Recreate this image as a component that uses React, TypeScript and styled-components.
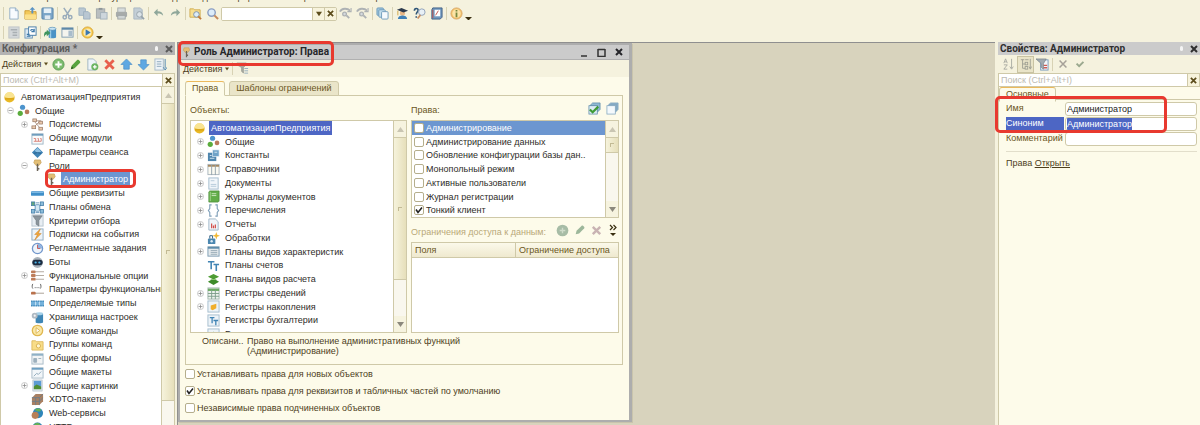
import React, { useEffect, useRef } from 'react';
import styled, { createGlobalStyle, css } from 'styled-components';

const FONT = '"Liberation Sans", Arial, sans-serif';
const TITLE_FONT = 'Roboto, "Liberation Sans", sans-serif';
const c = {
  cream: '#f5f2de',
  paper: '#fdfbea',
  desk: '#d8d3bd',
  line: '#cfc9a8',
  brown: '#4d3e1c',
  soft: '#7a6a44',
  blue: '#6c96d0',
  navy: '#4d66c4',
  red: '#e8392f',
};

const GlobalStyle = createGlobalStyle`
  * { box-sizing: border-box; }
  body { margin: 0; background: ${c.cream}; overflow: hidden; }
  button, input { font: inherit; color: inherit; }
  ::selection { background: ${c.navy}; color: #ffffff; }
`;

/* ---------- icons, all on a 14 x 14 grid ---------- */

const blueS = { fill: 'none', stroke: '#3c78a8', strokeWidth: 1.2 };

const art: Record<string, React.ReactNode> = {
  newDoc: <><path d="M3 1h6l3 3v9H3z" fill="#f8fbfe" stroke="#93aec6" /><path d="M9 1v3h3" fill="none" stroke="#93aec6" /></>,
  open: <><path d="M1 4h5l1 1h6v8H1z" fill="#f3c95c" stroke="#cf9d32" /><path d="M1 8h12v5H1z" fill="#fbe08c" /><path d="M8 7V3H6l3-3 3 3h-2v4z" fill="#5a93c4" /></>,
  save: <><rect x="1" y="1" width="12" height="12" rx="1" fill="#7ba5c8" stroke="#5884aa" /><rect x="3" y="1.500" width="8" height="5" fill="#e6f0f7" /><rect x="4" y="9" width="6" height="4" fill="#dfe9f0" /></>,
  cut: <g fill="none" stroke="#9aacbb" strokeWidth="1.600"><path d="M3 1l6 9M11 1L5 10" /><circle cx="4" cy="11" r="1.800" /><circle cx="10" cy="11" r="1.800" /></g>,
  copy: <g fill="#b9c7d2" stroke="#9fb1bf"><path d="M1 1h6l1 1v7H1z" /><path d="M6 5h5l2 2v6H6z" /></g>,
  paste: <><rect x="1.500" y="2" width="9" height="10" fill="#b9bec0" stroke="#a3a9ab" /><rect x="4" y="1" width="4" height="2" fill="#8f9699" /><rect x="6" y="6" width="7" height="7" fill="#cdd6dc" stroke="#a4b1ba" /></>,
  print: <><rect x="3" y="1" width="8" height="5" fill="#d7dcdd" stroke="#a8adad" /><rect x="1" y="5" width="12" height="6" rx="1.500" fill="#a7abaa" /><rect x="3" y="9" width="8" height="4" fill="#ced3d3" stroke="#a0a5a5" /></>,
  preview: <><path d="M2 1h7l2 2v10H2z" fill="#c3ced6" stroke="#a9b7c1" /><circle cx="8" cy="8" r="3" fill="#dbe3e8" stroke="#97a3ab" /><path d="M10 10l3 3" stroke="#97a3ab" strokeWidth="1.800" /></>,
  undo: <path d="M2 6l4-4v2.500c4 0 6 2 6 5-1.500-2-3-2.500-6-2.500V10z" fill="#8fa79a" />,
  redo: <path d="M12 6L8 2v2.500c-4 0-6 2-6 5 1.500-2 3-2.500 6-2.500V10z" fill="#8fa79a" />,
  folderFind: <><path d="M1 2h4l1 1h6v8H1z" fill="#f8df90" stroke="#d1ad53" /><circle cx="8" cy="8" r="3" fill="#dcecf8" stroke="#7b8fa6" /><path d="M10 10l3 3" stroke="#c07a3c" strokeWidth="2" /></>,
  find: <><circle cx="6" cy="6" r="4" fill="#dcecfa" stroke="#8a9dc1" strokeWidth="1.500" /><path d="M9 9l4 4" stroke="#c58a5c" strokeWidth="2.200" /></>,
  findNext: <g fill="none" stroke="#aeb2b4" strokeWidth="2"><path d="M1 5c2-4 8-4 11-1" /><path d="M13 1v4H9" strokeWidth="1.200" /><circle cx="6" cy="7.500" r="2" fill="#d5dade" strokeWidth="1.400" /><path d="M8 9l3 3" /></g>,
  windows: <g stroke="#6f9cbb"><rect x="1" y="1" width="7" height="8" rx="1" fill="#9cc4dc" /><rect x="3" y="3" width="7" height="8" rx="1" fill="#c3deec" /><rect x="6" y="5" width="7" height="8" rx="1" fill="#f5fafd" /></g>,
  graduate: <><circle cx="7" cy="6.500" r="2.800" fill="#e7b686" /><path d="M2 13c0-5 10-5 10 0z" fill="#3f80b8" /><path d="M1 3l5-2 7 3-5 2z" fill="#2c3a4d" /><path d="M2 4v5" stroke="#d3a544" /></>,
  helpFind: <><path d="M1.500 4c0-3 4-3 4-.5C5.500 5.500 3.500 5.500 3.500 8M3.500 10v1.500" fill="none" stroke="#2f5577" strokeWidth="1.700" /><circle cx="9.500" cy="5.500" r="3.500" fill="#e8f0f6" stroke="#8fa0b5" /><path d="M8 8.500l-3 4" stroke="#c78c60" strokeWidth="1.800" /></>,
  book: <><path d="M3 1h10v10l-2 2H2V3z" fill="#6f97be" stroke="#415f85" /><rect x="5" y="3" width="6" height="7" fill="#fff" /><path d="M6 9l3-5M3 3v9" stroke="#c0504a" /></>,
  info: <><circle cx="7" cy="7" r="6" fill="#f3c06a" stroke="#d8a767" /><circle cx="7" cy="7" r="4.500" fill="#fbe4a6" /><path d="M7 6v5M7 3.200v1.600" stroke="#75863e" strokeWidth="1.900" /></>,
  grayForm: <><rect x="2" y="1" width="11" height="12" fill="#d3d7d9" stroke="#c0c5c8" /><path d="M4 4h7M6 7h5M6 10h5" stroke="#a9afb3" strokeWidth="1.500" /></>,
  refreshForm: <><rect x="1" y="3" width="8" height="10" fill="#dbe8f2" stroke="#6e96b8" /><rect x="5" y="1" width="8" height="9" fill="#fff" stroke="#4379a5" /><path d="M7 5c1-2 4-1 4 1M11 3v3H8M3 9h3M3 11h4" {...blueS} /></>,
  dbUpdate: <><path d="M5 3v9c0 1.500 8 1.500 8 0V3z" fill="#4b93c6" /><path d="M7 4v9" stroke="#9bcbe8" strokeWidth="1.500" /><ellipse cx="9" cy="3" rx="4" ry="1.600" fill="#c9e4f3" stroke="#3f7eaa" strokeWidth=".6" /><path d="M0 12c0-5 1-6 3-6V4l4 3.500L3 11V9c-1 0-2 1-3 3z" fill="#3f9460" /></>,
  formCfg: <><rect x="1" y="2" width="12" height="10" fill="#f4f4ee" stroke="#7f9cb2" /><path d="M1 3h12" stroke="#5d88a8" strokeWidth="2" /><rect x="8" y="5" width="4" height="6" fill="#a8bccb" /></>,
  run: <><circle cx="7" cy="7" r="6" fill="#f7c744" stroke="#d7a53a" /><circle cx="7" cy="7" r="4.300" fill="#fbe9ae" /><path d="M5 3.500l5.500 3.500L5 10.500z" fill="#3b78b2" /></>,
  plus: <><circle cx="7" cy="7" r="6" fill="#7dbd6f" stroke="#5a9a54" /><path d="M7 3.500v7M3.500 7h7" stroke="#fff" strokeWidth="2" /></>,
  plusOff: <><circle cx="7" cy="7" r="6.300" fill="#a7bca6" /><path d="M7 4v6M4 7h6" stroke="#cfdccb" strokeWidth="1.500" /></>,
  pencil: <><path d="M2 12l1-4 6-6c1-1 4 2 3 3l-6 6z" fill="#58a33f" /><path d="M2 12l1-3 2 2z" fill="#2e5b22" /></>,
  pencilOff: <path d="M2 12l1-4 6-6c1-1 4 2 3 3l-6 6z" fill="#9db79b" />,
  addCopy: <><path d="M2 1h6l3 3v9H2z" fill="#eef4f8" stroke="#9fb4c4" /><circle cx="9.500" cy="9.500" r="3.800" fill="#6cb562" /><path d="M9.500 7.500v4M7.500 9.500h4" stroke="#fff" strokeWidth="1.300" /></>,
  del: <path d="M2.500 2.500l9 9M11.500 2.500l-9 9" stroke="#e8604d" strokeWidth="3" />,
  delOff: <path d="M3 3l8 8M11 3l-8 8" stroke="#c9b3b3" strokeWidth="2.600" />,
  up: <path d="M7 1l6 6h-3v5H4V7H1z" fill="#5fa8e2" stroke="#4a8cc6" strokeWidth=".7" />,
  down: <path d="M7 13l6-6h-3V2H4v5H1z" fill="#5fa8e2" stroke="#4a8cc6" strokeWidth=".7" />,
  sortList: <><rect x="1" y="1" width="9" height="12" fill="#eef3f7" stroke="#a6b9c8" /><path d="M3 4h5M3 6.500h5M3 9h5" stroke="#8ba6bb" /><path d="M12 1v10M10 10l2 3 2-3" fill="none" stroke="#4b84b2" /></>,
  ball: <><circle cx="7" cy="7" r="5.500" fill="#e9b824" /><path d="M1.500 6.500a5.500 5.500 0 0111 0c-3 1.500-8 1.500-11 0z" fill="#f9e492" /><path d="M2 8.500h10" stroke="#d39b12" /></>,
  common: <><circle cx="6" cy="3.500" r="2.800" fill="#4d94cd" /><circle cx="3.500" cy="10" r="2.800" fill="#5aac3d" /><circle cx="10.800" cy="8.500" r="2.500" fill="#b97a5c" /></>,
  subsystems: <g fill="#e9c9ae" stroke="#9b7b66" strokeWidth=".8"><path d="M4 4l5 6M9 4L3 10M5 3h6" fill="none" /><rect x="2" y="1" width="4" height="3" /><rect x="8.500" y="3.500" width="4" height="3" /><rect x="1" y="8.500" width="4" height="3" /><rect x="8.500" y="10" width="4" height="3" /></g>,
  modules: <><rect x="1" y="2" width="12" height="11" fill="#fafafa" stroke="#9db5c6" /><path d="M1 3h12" stroke="#6f9dbd" strokeWidth="2" /><path d="M3 7h2v3M7 7h1v3M10 7h1v3M3 10h8" fill="none" stroke="#d98278" /></>,
  session: <><path d="M7 1l6 6-6 6-6-6z" fill="#3f83b5" /><path d="M7 2l4 4-4 1.500L4 5z" fill="#8fc1e2" /><path d="M3 8l4-1 4 1" fill="none" stroke="#28618f" /></>,
  role: <><path d="M4 1h6l1 3-2.500 3h-3L3 4z" fill="#e3bf75" stroke="#c39c58" strokeWidth=".7" /><path d="M7 5v8M7 10.500h2" stroke="#6c6458" strokeWidth="1.600" /></>,
  attr: <><rect x="0" y="4.500" width="14" height="5" rx="1" fill="#3f8fc9" /><path d="M.5 5.800h13" stroke="#8cc5ea" /></>,
  exchange: <g stroke="#3f7ba8" strokeWidth=".8"><rect x="4.500" y="4" width="5" height="7" rx="1" fill="#d5e9f4" /><rect x=".5" y="1" width="3.500" height="4" fill="#63a77c" /><rect x="10" y="1" width="3.500" height="4" fill="#8bbcd9" /><rect x=".5" y="9" width="3.500" height="4" fill="#8bbcd9" /><rect x="10" y="9" width="3.500" height="4" fill="#8bbcd9" /><path d="M5 2h4M5 12.500h4" /></g>,
  funnel: <><rect x="1" y="1" width="12" height="12" fill="#e8eef3" stroke="#b5c3cd" /><path d="M2 2h10L8.500 7v6L5.500 11V7z" fill="#8b959c" stroke="#687279" strokeWidth=".6" /></>,
  event: <><rect x="1" y="1" width="12" height="12" fill="#edf3f8" stroke="#8fabc2" /><path d="M10 1L4 7h3l-3 6 7-7H8z" fill="#f3a93b" stroke="#c4781f" strokeWidth=".5" /></>,
  clock: <><circle cx="7" cy="7" r="5.500" fill="#eef4fb" stroke="#7398cc" strokeWidth="1.400" /><path d="M7 7V2a5 5 0 015 5z" fill="#8fb3e0" /><path d="M7 3v4h3" fill="none" stroke="#c65b5b" /></>,
  bot: <><circle cx="7" cy="7" r="5.800" fill="#a9b2ba" /><rect x="1.500" y="4" width="11" height="6" rx="3" fill="#1c2b40" /><circle cx="5" cy="7" r="1.200" fill="#4db5e8" /><circle cx="9" cy="7" r="1.200" fill="#4db5e8" /></>,
  options: <g strokeWidth="1.200" stroke="#b5aca2"><path d="M5 3h9M5 7h9M5 11h9" /><g fill="#bd7c59" stroke="none"><rect x="0" y="1.500" width="5" height="3" rx="1" /><rect x="0" y="5.500" width="5" height="3" rx="1" /><rect x="0" y="9.500" width="5" height="3" rx="1" /></g></g>,
  optParams: <><path d="M2 1C1 2 1 5 2 6M10 1c1 1 1 4 0 5M4 5h1M6 5h1M8 5h1" fill="none" stroke="#5b5b5b" /><path d="M4 11h10" stroke="#a59a8f" /><rect x="0" y="9.500" width="5" height="3" rx="1" fill="#b9714c" /></>,
  types: <><rect x="0" y="4" width="14" height="6" fill="#74b2dc" /><path d="M0 4.500h14M0 9.500h14" stroke="#2f78ab" strokeDasharray="1.500 1" /><path d="M5 5v4M9 5v4" stroke="#d5eaf7" /></>,
  storage: <><path d="M5 3v9c0 1.500 8 1.500 8 0V3z" fill="#3f86b5" /><ellipse cx="9" cy="3" rx="4" ry="1.600" fill="#a7d1e9" /><circle cx="4" cy="5" r="3.200" fill="#aeb9c2" /><circle cx="4" cy="5" r="1.200" fill="#f3f5f6" /></>,
  commands: <><circle cx="7" cy="7" r="5.600" fill="#fae8a8" stroke="#e0b750" strokeWidth="1.400" /><path d="M5.500 4l4 3-4 3z" fill="#fffdf2" stroke="#d6a93c" strokeWidth=".8" /></>,
  cmdGroup: <><path d="M1 3h4l1 1h7v9H1z" fill="#f8dd88" stroke="#deba60" /><circle cx="8" cy="8.500" r="2.300" fill="#fff6d2" stroke="#d8b04d" /></>,
  forms: <><rect x="1" y="2" width="12" height="11" fill="#f2f4f5" stroke="#a7bac7" /><path d="M1 3h12" stroke="#8eb0c6" strokeWidth="2" /><path d="M3 7h3v4H3zM8 7h3" fill="#9db0bd" stroke="#9db0bd" /></>,
  layouts: <><rect x="1" y="2" width="12" height="11" fill="#f2f6f9" stroke="#a7bac7" /><path d="M1 3h12" stroke="#6e9fc2" strokeWidth="2" /><path d="M3 11l3-3 2 1 3-3" fill="none" stroke="#8fa9bb" /></>,
  pictures: <><rect x="2" y="1" width="10" height="12" fill="#dfe7ec" stroke="#a4b3bd" strokeWidth=".6" /><rect x="3" y="2" width="8" height="6" fill="#5c9bd3" /><path d="M3 8l3-2 5 2v3H3z" fill="#4e8d33" /></>,
  xdto: <><path d="M1 5l4-4h8v8l-4 4H1z" fill="#a98062" /><path d="M1 5h8v8M9 5l4-4M1 9h8l4-4M5 5v8" fill="none" stroke="#6f7d88" /></>,
  web: <><circle cx="7.500" cy="6.500" r="5.500" fill="#2f86b9" /><path d="M4 3c2-2 6-2 7 0-1 3-5 2-7 0z" fill="#64b056" /><circle cx="4.500" cy="9" r="3.800" fill="#b78057" /></>,
  http: <><circle cx="7" cy="7" r="5.500" fill="#2f86b9" /><path d="M3 4c2-3 6-3 7 0-1 2-5 2-7 0z" fill="#64b056" /></>,
  constants: <><rect x="1" y="4" width="9" height="9" fill="#4f86ae" /><rect x="6" y="1" width="7" height="7" fill="#6fa3c8" stroke="#e6f0f7" strokeWidth=".7" /><path d="M3 7h2M3 10h5M8 3.500h3" stroke="#d4e6f2" /></>,
  catalogs: <><rect x="1" y="1.500" width="12" height="11" fill="#fbfaf2" stroke="#a9b5bd" /><path d="M1 3h12" stroke="#a5875f" strokeWidth="2" /><path d="M5 2v11M9 2v11" stroke="#93a2ac" /></>,
  docs: <><rect x="2" y="1" width="10" height="12" fill="#f1f6fa" stroke="#a3bbcd" /><path d="M4 8h6M4 10h6M4 4h4" stroke="#b4c9d8" /></>,
  journals: <><path d="M3 1h10v11l-1 1H2V2z" fill="#62ad48" stroke="#4a8c3b" strokeWidth=".8" /><path d="M5 4h5M5 6h5" stroke="#cfe9c3" /><path d="M3.500 2v10" stroke="#a4d48f" /></>,
  enums: <g fill="none" stroke="#7d9eb8" strokeWidth="1.200"><path d="M5 1H3v4L1.500 7 3 9v4h2M9 1h2v4l1.500 2L11 9v4H9" /></g>,
  reports: <><path d="M2 1h7l3 3v9H2z" fill="#f0f5f9" stroke="#9fb6c8" /><path d="M5 11V6M7 11V8M9 11V7" stroke="#d34f4a" strokeWidth="1.300" /></>,
  processing: <><rect x="1" y="7" width="8" height="6" rx="1" fill="#4b87b0" /><path d="M3 7V4h3v3" fill="none" stroke="#2d5c7e" /><circle cx="5" cy="10" r="1.300" fill="#d9e9f3" /><path d="M10 0l1 3 3 1-3 1-1 3-1-3-3-1 3-1z" fill="#f2b935" /></>,
  charPlans: <><rect x="1" y="2" width="12" height="10" fill="#e3e9ec" stroke="#7d9db3" /><path d="M1 3h12" stroke="#5d8cab" strokeWidth="2" /><path d="M4 6h7M4 8h7M4 10h7" stroke="#98abb7" /></>,
  accounts: <g fill="none" stroke="#4084b4" strokeWidth="1.700"><path d="M1 3h7M4.500 3v8" /><path d="M7 6h6M10 6v7" /></g>,
  calcPlans: <><path d="M7 1l6 3-6 3-6-3z" fill="#4e9c34" /><path d="M7 6l6 3.500L7 13 1 9.500z" fill="#3d8b29" /><path d="M4 7h6" stroke="#8ec977" /></>,
  infoReg: <><rect x="1" y="1" width="12" height="12" fill="#eef3ee" stroke="#a2b6ae" /><path d="M1 3h12" stroke="#6bab62" strokeWidth="2.500" /><path d="M1 7h12M1 10h12M5 3v10M9 3v10" stroke="#7d9f8a" /></>,
  accumReg: <><rect x="1" y="1" width="12" height="12" fill="#edf3f8" stroke="#a4bccd" /><path d="M4 6l6-2v5l-4 2-2-1z" fill="#f0af2e" /></>,
  accReg: <><rect x="1" y="1" width="12" height="12" fill="#edf3f8" stroke="#a4bccd" /><path d="M3 4h5M5.500 4v6M7 7h5M9.500 7v5" stroke="#4084b4" strokeWidth="1.400" /></>,
  calcReg: <><rect x="1" y="1" width="12" height="12" fill="#edf3f8" stroke="#a4bccd" /><path d="M7 4l4 2-4 2-4-2z" fill="#4e9c34" /></>,
  checkAll: <g stroke="#5b8aa8" strokeWidth=".8"><path d="M5 1h8v7l-3 3V4H2z" fill="#8fb9d2" /><rect x="1" y="4" width="9" height="9" fill="#dcebf4" /><path d="M2 8l3 3 6-6" fill="none" stroke="#3f9b36" strokeWidth="2.400" /></g>,
  uncheckAll: <g stroke="#7ea3bd" strokeWidth=".8"><path d="M5 1h8v7l-3 3V4H2z" fill="#8fb3cc" /><path d="M3 2.500h8.500V10" fill="none" /><rect x="1" y="4" width="9" height="9" fill="#f4f9fc" /></g>,
  filterOff: <><path d="M1 1h10v2L8 6v6L6 10V6L1 3z" fill="#a8aaa2" stroke="#888b85" strokeWidth=".6" /><path d="M9 7h4M9 9.500h4M9 12h4" stroke="#94aebd" /></>,
  az: <g fill="none" stroke="#a3a59e"><path d="M1 6l2-5 2 5M2 4.500h2M1 8h4l-4 5h4" /><path d="M10 1v11M8 10l2 3 2-3" /></g>,
  category: <g fill="none" stroke="#9a9c90"><path d="M1 2h4M3 2v10h3M3 7h3" /><rect x="6" y="5" width="3" height="3" /><rect x="6" y="10" width="3" height="3" /><path d="M12 1v11M10.500 10l1.500 3 1.500-3M6 2h4" /></g>,
  filterDoc: <><rect x="5" y="2" width="8" height="11" fill="#f2f6fa" stroke="#7a9dbd" /><path d="M8 8h4M8 10.500h4" stroke="#ce5b54" strokeWidth="1.400" /><path d="M0 1h11L8 6v6L5.500 10V6z" fill="#a3abb1" stroke="#727c84" strokeWidth=".7" /></>,
  cancel: <path d="M3 3l8 8M11 3l-8 8" stroke="#a6a199" strokeWidth="1.800" />,
  ok: <path d="M3 6.500l3 3 5-5" fill="none" stroke="#9aa88e" strokeWidth="2.200" />,
};

const Svg = styled.svg<{ $s?: number }>`
  display: block;
  flex: none;
  width: ${p => p.$s ?? 13}px;
  height: ${p => p.$s ?? 13}px;
`;
const Icon = ({ name, size }: { name: string; size?: number }) => (
  <Svg viewBox="0 0 14 14" $s={size} aria-hidden="true">{art[name]}</Svg>
);

/* ---------- shared parts ---------- */

const Shell = styled.div`
  display: flex;
  flex-direction: column;
  height: 100vh;
  overflow: hidden;
  background: ${c.cream};
  color: #2e2c28;
  font: 9px/14px ${FONT};
`;
const MenuStrip = styled.nav`
  display: flex;
  align-items: flex-end;
  gap: 10px;
  height: 2px;
  padding-left: 8px;
  overflow: hidden;
  color: ${c.brown};
  line-height: 10px;
  white-space: nowrap;
`;
const Toolbars = styled.header`
  padding: 2px 2px 0;
`;
const ToolRow = styled.div`
  display: flex;
  align-items: center;
  height: 19px;
`;
const ToolButton = styled.button<{ $on?: boolean; $w?: number }>`
  display: flex;
  flex: none;
  align-items: center;
  justify-content: center;
  width: ${p => p.$w ?? 17}px;
  height: 17px;
  padding: 0;
  border: 0;
  background: none;
  ${p => p.$on && css`
    background: #e9e4c8;
    box-shadow: inset 0 0 0 1px #c9c3a2;
  `}
`;
const Sep = styled.span`
  flex: none;
  width: 1px;
  height: 13px;
  margin: 0 1px;
  background: #d8d2b4;
`;
const More = styled.button`
  align-self: flex-end;
  width: 7px;
  height: 7px;
  padding: 0;
  border: 0;
  background: none;
  &::before {
    content: '';
    display: block;
    border: 3px solid transparent;
    border-top-color: #3a2f10;
  }
`;
const Combo = styled.div`
  display: flex;
  width: 116px;
  height: 14px;
  border: 1px solid ${c.line};
  border-radius: 2px;
  background: #fff;
  overflow: hidden;
`;
const BareInput = styled.input`
  flex: 1;
  min-width: 0;
  padding: 0 2px;
  border: 0;
  outline: 0;
  background: #fff;
  &::placeholder { color: #bcbab2; opacity: 1; }
`;
const FieldButton = styled.button`
  display: flex;
  flex: none;
  align-items: center;
  justify-content: center;
  width: 12px;
  padding: 0;
  border: 0;
  border-left: 1px solid ${c.line};
  background: #f7f3dc;
  color: #5c4c1c;
`;
const Cross = ({ size = 7, width = 2 }: { size?: number; width?: number }) => (
  <svg width={size} height={size} viewBox="0 0 8 8" aria-hidden="true">
    <path d="M1 1l6 6M7 1L1 7" stroke="currentColor" strokeWidth={width} />
  </svg>
);
const Caret = ({ up, color = '#5c4c1c', size = 7 }: { up?: boolean; color?: string; size?: number }) => (
  <svg width={size} height={size} viewBox="0 0 7 7" aria-hidden="true">
    <path d={up ? 'M0 6h7L3.500 1z' : 'M0 1h7L3.500 6z'} fill={color} />
  </svg>
);
const Highlight = styled.span<{ $box: [number, number, number, number] }>`
  position: absolute;
  z-index: 5;
  left: ${p => p.$box[0]}px;
  top: ${p => p.$box[1]}px;
  width: ${p => p.$box[2]}px;
  height: ${p => p.$box[3]}px;
  border: 3px solid ${c.red};
  border-radius: 5px;
  pointer-events: none;
`;
const Work = styled.main`
  display: flex;
  flex: 1;
  min-height: 0;
`;
const PanelTitle = styled.h2<{ $dim?: boolean }>`
  display: flex;
  flex: none;
  align-items: center;
  gap: 6px;
  height: 13px;
  margin: 0;
  padding: 0 2px;
  background: ${p => (p.$dim ? '#b3b3b3' : '#cbcbcb')};
  color: ${p => (p.$dim ? '#5b5b5b' : '#2f2f2f')};
  font: bold 10px/13px ${TITLE_FONT};
  white-space: nowrap;
`;
const Grow = styled.span`
  flex: 1;
`;
const Pin = styled.span`
  width: 3px;
  height: 5px;
  border-radius: 2px;
  background: #f4f4f4;
`;
const CaptionButton = styled.button`
  display: flex;
  align-items: center;
  justify-content: center;
  width: 9px;
  height: 11px;
  padding: 0;
  border: 0;
  background: none;
`;
const PanelTools = styled.div`
  display: flex;
  flex: none;
  align-items: center;
  height: 18px;
  padding-left: 2px;
`;
const MenuButton = styled.button`
  display: flex;
  align-items: center;
  gap: 3px;
  margin-right: 2px;
  padding: 0;
  border: 0;
  background: none;
  color: ${c.brown};
`;
const Search = styled.div`
  display: flex;
  flex: none;
  height: 14px;
  border: 1px solid ${c.line};
  background: #fff;
`;

/* ---------- scroll bar ---------- */

const Bar = styled.div`
  display: flex;
  flex: none;
  flex-direction: column;
  width: 13px;
  border-left: 1px solid ${c.line};
  background: #f9f7ee;
`;
const BarButton = styled.button`
  display: flex;
  flex: none;
  align-items: center;
  justify-content: center;
  height: 16px;
  padding: 0;
  border: 0;
  background: #f6f3df;
`;
const Thumb = styled.div<{ $h: number }>`
  display: flex;
  flex: none;
  align-items: center;
  justify-content: center;
  height: ${p => p.$h}px;
  border: solid ${c.line};
  border-width: 1px 0;
  background: linear-gradient(90deg, #f6f3dc, #e6dfba);
  &::after {
    content: '';
    width: 3px;
    height: 3px;
    border: solid #c2ba94;
    border-width: 1px 0 0 1px;
  }
`;
const ScrollBar = ({ thumb, down = true }: { thumb: number; down?: boolean }) => (
  <Bar>
    <BarButton aria-label="Вверх"><Caret up color="#c9c5b2" /></BarButton>
    <Thumb $h={thumb} />
    <Grow />
    {down && <BarButton aria-label="Вниз"><Caret color="#8b887c" /></BarButton>}
  </Bar>
);

/* ---------- tree ---------- */

type Node = { t: string; i: string; l: number; e?: '+' | '-'; sel?: 'navy' | 'blue' };

const List = styled.ul`
  flex: 1;
  min-width: 0;
  margin: 0;
  padding: 0;
  overflow: hidden;
  background: #fff;
  list-style: none;
`;
const Item = styled.li<{ $pad: number }>`
  display: flex;
  align-items: center;
  height: 14px;
  padding-left: ${p => p.$pad}px;
  white-space: nowrap;
  &:nth-child(4n + 2) { height: 13px; }
`;
const Toggle = styled.button`
  display: flex;
  flex: none;
  align-items: center;
  justify-content: center;
  width: 14px;
  height: 13px;
  padding: 0;
  border: 0;
  background: none;
`;
const Gap = styled.span`
  flex: none;
  width: 14px;
`;
const Name = styled.span<{ $sel?: 'navy' | 'blue' }>`
  margin-left: 3px;
  padding: 0 2px;
  line-height: 14px;
  ${p => p.$sel && css`
    background: ${p.$sel === 'navy' ? c.navy : c.blue};
    color: #fff;
  `}
`;
const Tree = ({ nodes, inset, label }: { nodes: Node[]; inset: number; label: string }) => (
  <List role="tree" aria-label={label}>
    {nodes.map(n => (
      <Item key={n.t} role="treeitem" $pad={inset + Math.max(0, n.l - 1) * 14}>
        {n.e ? (
          <Toggle aria-label={n.e === '+' ? 'Развернуть' : 'Свернуть'}>
            <svg width="7" height="7" viewBox="0 0 7 7" fill="none" stroke="#bdbdbd" strokeWidth=".8">
              <circle cx="3.500" cy="3.500" r="3" />
              <path d={n.e === '+' ? 'M1.500 3.500h4M3.500 1.500v4' : 'M1.500 3.500h4'} stroke="#8c8c8c" />
            </svg>
          </Toggle>
        ) : n.l > 0 && <Gap />}
        <Icon name={n.i} />
        <Name $sel={n.sel}>{n.t}</Name>
      </Item>
    ))}
  </List>
);

const config: Node[] = [
  { t: 'АвтоматизацияПредприятия', i: 'ball', l: 0 },
  { t: 'Общие', i: 'common', l: 1, e: '-' },
  { t: 'Подсистемы', i: 'subsystems', l: 2, e: '+' },
  { t: 'Общие модули', i: 'modules', l: 2 },
  { t: 'Параметры сеанса', i: 'session', l: 2 },
  { t: 'Роли', i: 'role', l: 2, e: '-' },
  { t: 'Администратор', i: 'role', l: 3, sel: 'blue' },
  { t: 'Общие реквизиты', i: 'attr', l: 2 },
  { t: 'Планы обмена', i: 'exchange', l: 2 },
  { t: 'Критерии отбора', i: 'funnel', l: 2 },
  { t: 'Подписки на события', i: 'event', l: 2 },
  { t: 'Регламентные задания', i: 'clock', l: 2 },
  { t: 'Боты', i: 'bot', l: 2 },
  { t: 'Функциональные опции', i: 'options', l: 2, e: '+' },
  { t: 'Параметры функциональных опций', i: 'optParams', l: 2 },
  { t: 'Определяемые типы', i: 'types', l: 2 },
  { t: 'Хранилища настроек', i: 'storage', l: 2 },
  { t: 'Общие команды', i: 'commands', l: 2 },
  { t: 'Группы команд', i: 'cmdGroup', l: 2 },
  { t: 'Общие формы', i: 'forms', l: 2 },
  { t: 'Общие макеты', i: 'layouts', l: 2 },
  { t: 'Общие картинки', i: 'pictures', l: 2, e: '+' },
  { t: 'XDTO-пакеты', i: 'xdto', l: 2 },
  { t: 'Web-сервисы', i: 'web', l: 2 },
  { t: 'HTTP-сервисы', i: 'http', l: 2 },
];
const objects: Node[] = [
  { t: 'АвтоматизацияПредприятия', i: 'ball', l: 0, sel: 'navy' },
  { t: 'Общие', i: 'common', l: 1, e: '+' },
  { t: 'Константы', i: 'constants', l: 1, e: '+' },
  { t: 'Справочники', i: 'catalogs', l: 1, e: '+' },
  { t: 'Документы', i: 'docs', l: 1, e: '+' },
  { t: 'Журналы документов', i: 'journals', l: 1, e: '+' },
  { t: 'Перечисления', i: 'enums', l: 1, e: '+' },
  { t: 'Отчеты', i: 'reports', l: 1, e: '+' },
  { t: 'Обработки', i: 'processing', l: 1 },
  { t: 'Планы видов характеристик', i: 'charPlans', l: 1, e: '+' },
  { t: 'Планы счетов', i: 'accounts', l: 1 },
  { t: 'Планы видов расчета', i: 'calcPlans', l: 1 },
  { t: 'Регистры сведений', i: 'infoReg', l: 1, e: '+' },
  { t: 'Регистры накопления', i: 'accumReg', l: 1, e: '+' },
  { t: 'Регистры бухгалтерии', i: 'accReg', l: 1 },
  { t: 'Регистры расчета', i: 'calcReg', l: 1 },
];
const rights = [
  'Администрирование', 'Администрирование данных', 'Обновление конфигурации базы дан..',
  'Монопольный режим', 'Активные пользователи', 'Журнал регистрации', 'Тонкий клиент',
];

/* ---------- left panel ---------- */

const ConfigPanel = styled.aside`
  position: relative;
  display: flex;
  flex: none;
  flex-direction: column;
  width: 177px;
  padding-right: 2px;
`;
const TreeArea = styled.div`
  display: flex;
  flex: 1;
  min-height: 0;
  border-left: 1px solid ${c.line};
  border-right: 1px solid ${c.line};
  & > ul { padding-top: 3px; }
`;

/* ---------- desktop and window ---------- */

const Desktop = styled.section`
  flex: 1;
  min-width: 0;
  border: solid #8f8f8f;
  border-width: 1px 0 0 1px;
  background: ${c.desk};
`;
const Win = styled.div`
  position: relative;
  width: 454px;
  border: 2px solid #adadad;
  border-right-width: 3px;
  background: ${c.paper};
  box-shadow: 1px 1px 0 #c9c4ac;
`;
const WinTitle = styled.h1`
  display: flex;
  align-items: center;
  gap: 2px;
  height: 15px;
  margin: 0;
  padding: 0 3px 0 1px;
  background: #cbcbcb;
  border-bottom: 1px solid #b0b0b0;
  color: #26262a;
  font: bold 10px/14px ${TITLE_FONT};
`;
const WinButton = styled(CaptionButton)`
  width: 15px;
  height: 13px;
`;
const WinTools = styled(PanelTools)`
  height: 17px;
  padding-left: 3px;
  background: ${c.cream};
`;
const WinBody = styled.div`
  padding: 4px 6px 4px 5px;
  color: ${c.brown};
`;
const Tabs = styled.div`
  display: flex;
  gap: 4px;
`;
const Tab = styled.button<{ $on?: boolean }>`
  z-index: 1;
  height: 15px;
  margin-bottom: -1px;
  padding: 0 6px;
  border: 1px solid ${c.line};
  border-bottom-color: ${p => (p.$on ? c.paper : c.line)};
  border-top-color: ${p => (p.$on ? '#ecb95c' : c.line)};
  border-radius: 3px 3px 0 0;
  background: ${p => (p.$on ? c.paper : '#eae5c9')};
  color: #6a5622;
  line-height: 13px;
`;
const Pane = styled.div`
  padding: 0 3px 8px 4px;
  border: 1px solid ${c.line};
`;
const Columns = styled.div`
  display: grid;
  grid-template-columns: 217px 1fr;
  column-gap: 4px;
`;
const Column = styled.div`
  display: flex;
  flex-direction: column;
`;
const ColumnHead = styled.div<{ $off?: boolean }>`
  display: flex;
  align-items: center;
  gap: 4px;
  height: 24px;
  color: ${p => (p.$off ? '#b9a878' : '#6a5622')};
  white-space: nowrap;
  & > span:first-child { padding-top: 4px; }
`;
const Box = styled.div<{ $h?: number }>`
  display: flex;
  height: ${p => (p.$h ? `${p.$h}px` : 'auto')};
  border: 1px solid ${c.line};
  background: #fff;
  color: #2e2c28;
`;
const CheckLabel = styled.label<{ $sel?: boolean }>`
  display: flex;
  align-items: center;
  gap: 2px;
  width: 100%;
  height: 100%;
  background: ${p => (p.$sel ? c.blue : 'transparent')};
  color: ${p => (p.$sel ? '#fff' : 'inherit')};
`;
const Check = styled.input.attrs({ type: 'checkbox' })`
  appearance: none;
  flex: none;
  width: 10px;
  height: 10px;
  margin: 0;
  border: 1px solid #b5ae8c;
  border-radius: 2px;
  background: #fff;
  &:checked {
    background: #fff url("data:image/svg+xml,%3Csvg xmlns='http://www.w3.org/2000/svg' viewBox='0 0 8 8'%3E%3Cpath d='M1 3.500l2 3 4-5' fill='none' stroke='%23222' stroke-width='1.600'/%3E%3C/svg%3E") center / 8px 8px no-repeat;
  }
`;
const Limits = styled.table`
  width: 100%;
  border-collapse: separate;
  border-spacing: 0;
  table-layout: fixed;
  align-self: flex-start;
  th {
    height: 15px;
    padding: 0 3px;
    border-bottom: 1px solid ${c.line};
    background: linear-gradient(#fbf9ea, #efe9cf);
    color: #6a5622;
    font-weight: normal;
    text-align: left;
  }
  th + th { border-left: 1px solid ${c.line}; }
`;
const Overflow = styled.button`
  display: flex;
  flex-direction: column;
  align-items: center;
  width: 12px;
  padding: 0;
  border: 0;
  background: none;
`;
const Description = styled.dl`
  display: grid;
  grid-template-columns: 45px 1fr;
  margin: 0;
  padding: 3px 11px 0 12px;
  line-height: 10px;
  dd { margin: 0; max-width: 240px; }
`;
const Defaults = styled.div`
  display: grid;
  grid-auto-rows: 17px;
`;

/* ---------- properties ---------- */

const Props = styled.aside`
  position: relative;
  display: flex;
  flex: none;
  flex-direction: column;
  width: 205px;
  padding-left: 3px;
  color: ${c.brown};
`;
const PropBody = styled.div`
  flex: 1;
  border-left: 1px solid ${c.line};
  background: ${c.paper};
`;
const PropTabs = styled.div`
  display: flex;
  height: 13px;
  border-bottom: 1px solid ${c.line};
`;
const PropForm = styled.div`
  padding: 2px 3px 0 7px;
`;
const PropRow = styled.div`
  display: flex;
  gap: 1px;
  height: 14px;
  margin-bottom: 1px;
`;
const PropLabel = styled.label<{ $sel?: boolean }>`
  flex: none;
  width: 58px;
  line-height: 13px;
  background: ${p => (p.$sel ? c.navy : 'transparent')};
  color: ${p => (p.$sel ? '#fff' : '#6a5622')};
`;
const PropInput = styled.input`
  flex: 1;
  min-width: 0;
  padding: 0 1px;
  border: 1px solid ${c.line};
  border-radius: 3px;
  outline: 0;
  background: #fff;
  color: #222;
`;
const PropLink = styled.p`
  margin: 5px 0 0;
  padding-top: 4px;
  border-top: 1px solid #e2decb;
  a { color: ${c.brown}; }
`;

const Tools = ({ names, size }: { names: string[]; size?: number }) => (
  <>
    {names.map((n, i) => n === '|'
      ? <Sep key={i} />
      : <ToolButton key={i} aria-label={n}><Icon name={n} size={size} /></ToolButton>)}
  </>
);

export default function App() {
  const synonym = useRef<HTMLInputElement>(null);
  useEffect(() => { synonym.current?.select(); }, []);

  return (
    <Shell>
      <GlobalStyle />
      <MenuStrip>
        {['Файл', 'Правка', 'Конфигурация', 'Отладка', 'Администрирование', 'Сервис', 'Окна', 'Справка'].map(m => <span key={m}>{m}</span>)}
      </MenuStrip>
      <Toolbars>
        <ToolRow>
          <Tools names={['|', 'newDoc', 'open', 'save', '|', 'cut', 'copy', 'paste', '|', 'print', 'preview', '|', 'undo', 'redo', '|', 'folderFind', 'find']} />
          <Combo>
            <BareInput aria-label="Найти" />
            <FieldButton aria-label="Список"><Caret size={6} /></FieldButton>
            <FieldButton aria-label="Очистить"><Cross /></FieldButton>
          </Combo>
          <Tools names={['findNext', 'findNext', '|', 'windows', '|', 'graduate', 'helpFind', 'book', '|', 'info']} />
          <More aria-label="Ещё" />
        </ToolRow>
        <ToolRow>
          <Tools names={['|', 'grayForm', 'refreshForm', '|', 'dbUpdate', 'formCfg', '|', 'run']} />
          <More aria-label="Ещё" />
        </ToolRow>
      </Toolbars>
      <Work>
        <ConfigPanel>
          <PanelTitle $dim>Конфигурация *<Grow /><Pin /><CaptionButton aria-label="Закрыть"><Cross size={8} /></CaptionButton></PanelTitle>
          <PanelTools>
            <MenuButton>Действия <Caret size={4} /></MenuButton>
            <Tools names={['plus', 'pencil', 'addCopy', 'del', 'up', 'down', 'sortList']} />
          </PanelTools>
          <Search>
            <BareInput aria-label="Поиск" placeholder="Поиск (Ctrl+Alt+M)" />
            <FieldButton aria-label="Очистить"><Cross /></FieldButton>
          </Search>
          <TreeArea>
            <Tree nodes={config} inset={2} label="Конфигурация" />
            <ScrollBar thumb={298} down={false} />
          </TreeArea>
          <Highlight $box={[45, 127, 91, 19]} />
        </ConfigPanel>

        <Desktop>
          <Win>
            <WinTitle>
              <Icon name="role" size={11} />
              Роль Администратор: Права
              <Grow />
              <WinButton aria-label="Свернуть"><svg width="9" height="9" viewBox="0 0 9 9"><path d="M1 8h6" stroke="#333" strokeWidth="1.500" /></svg></WinButton>
              <WinButton aria-label="Развернуть"><svg width="9" height="9" viewBox="0 0 9 9"><path d="M1 1.500h7M1 1v7.500h7V1" fill="none" stroke="#333" strokeWidth="1.500" /></svg></WinButton>
              <WinButton aria-label="Закрыть"><Cross size={8} /></WinButton>
            </WinTitle>
            <WinTools>
              <MenuButton>Действия <Caret size={4} /></MenuButton>
              <Sep />
              <ToolButton aria-label="Отбор"><Icon name="filterOff" /></ToolButton>
            </WinTools>
            <WinBody>
              <Tabs role="tablist">
                <Tab role="tab" $on>Права</Tab>
                <Tab role="tab">Шаблоны ограничений</Tab>
              </Tabs>
              <Pane>
                <Columns>
                  <Column>
                    <ColumnHead><span>Объекты:</span></ColumnHead>
                    <Box $h={213}>
                      <Tree nodes={objects} inset={2} label="Объекты" />
                      <ScrollBar thumb={143} />
                    </Box>
                  </Column>
                  <Column>
                    <ColumnHead>
                      <span>Права:</span><Grow />
                      <ToolButton $w={14} aria-label="Отметить все"><Icon name="checkAll" /></ToolButton>
                      <ToolButton $w={14} aria-label="Снять все"><Icon name="uncheckAll" /></ToolButton>
                    </ColumnHead>
                    <Box>
                      <List>
                        {rights.map((r, i) => (
                          <Item key={r} $pad={0}>
                            <CheckLabel $sel={i === 0}>
                              <span />
                              <Check defaultChecked={i === 6} />
                              <span>{r}</span>
                            </CheckLabel>
                          </Item>
                        ))}
                      </List>
                      <ScrollBar thumb={16} />
                    </Box>
                    <ColumnHead $off>
                      <span>Ограничения доступа к данным:</span><Grow />
                      <ToolButton $w={13} aria-label="Добавить"><Icon name="plusOff" /></ToolButton>
                      <ToolButton $w={13} aria-label="Изменить"><Icon name="pencilOff" size={12} /></ToolButton>
                      <ToolButton $w={13} aria-label="Удалить"><Icon name="delOff" /></ToolButton>
                      <Overflow aria-label="Ещё">
                        <svg width="8" height="12" viewBox="0 0 8 12"><path d="M1 1l2.500 2.500L1 6M4.500 1L7 3.500 4.500 6" fill="none" stroke="#3a2f10" strokeWidth="1.200" /><path d="M1 9h6L4 12z" fill="#3a2f10" /></svg>
                      </Overflow>
                    </ColumnHead>
                    <Box $h={91}>
                      <Limits>
                        <thead><tr><th scope="col">Поля</th><th scope="col">Ограничение доступа</th></tr></thead>
                      </Limits>
                    </Box>
                  </Column>
                </Columns>
                <Description>
                  <dt>Описани..</dt>
                  <dd>Право на выполнение административных функций (Администрирование)</dd>
                </Description>
              </Pane>
              <Defaults>
                <CheckLabel><Check />Устанавливать права для новых объектов</CheckLabel>
                <CheckLabel><Check defaultChecked />Устанавливать права для реквизитов и табличных частей по умолчанию</CheckLabel>
                <CheckLabel><Check />Независимые права подчиненных объектов</CheckLabel>
              </Defaults>
            </WinBody>
            <Highlight $box={[-2, -4, 156, 25]} />
          </Win>
        </Desktop>

        <Props>
          <PanelTitle>Свойства: Администратор<Grow /><Pin /><CaptionButton aria-label="Закрыть"><Cross size={8} /></CaptionButton></PanelTitle>
          <PanelTools>
            <ToolButton aria-label="По алфавиту"><Icon name="az" size={12} /></ToolButton>
            <ToolButton $on aria-label="По категориям"><Icon name="category" size={12} /></ToolButton>
            <ToolButton aria-label="Отбор"><Icon name="filterDoc" /></ToolButton>
            <Tools names={['|', 'cancel', 'ok']} size={12} />
          </PanelTools>
          <Search>
            <BareInput aria-label="Поиск свойства" placeholder="Поиск (Ctrl+Alt+I)" />
            <FieldButton aria-label="Очистить"><Cross /></FieldButton>
          </Search>
          <PropBody>
            <PropTabs role="tablist"><Tab role="tab" $on>Основные</Tab></PropTabs>
            <PropForm>
              <PropRow><PropLabel htmlFor="p-name">Имя</PropLabel><PropInput id="p-name" defaultValue="Администратор" /></PropRow>
              <PropRow><PropLabel htmlFor="p-syn" $sel>Синоним</PropLabel><PropInput id="p-syn" ref={synonym} defaultValue="Администратор" /></PropRow>
              <PropRow><PropLabel htmlFor="p-com">Комментарий</PropLabel><PropInput id="p-com" /></PropRow>
              <PropLink>Права <a href="#rights">Открыть</a></PropLink>
            </PropForm>
          </PropBody>
          <Highlight $box={[0, 54, 172, 37]} />
        </Props>
      </Work>
    </Shell>
  );
}
